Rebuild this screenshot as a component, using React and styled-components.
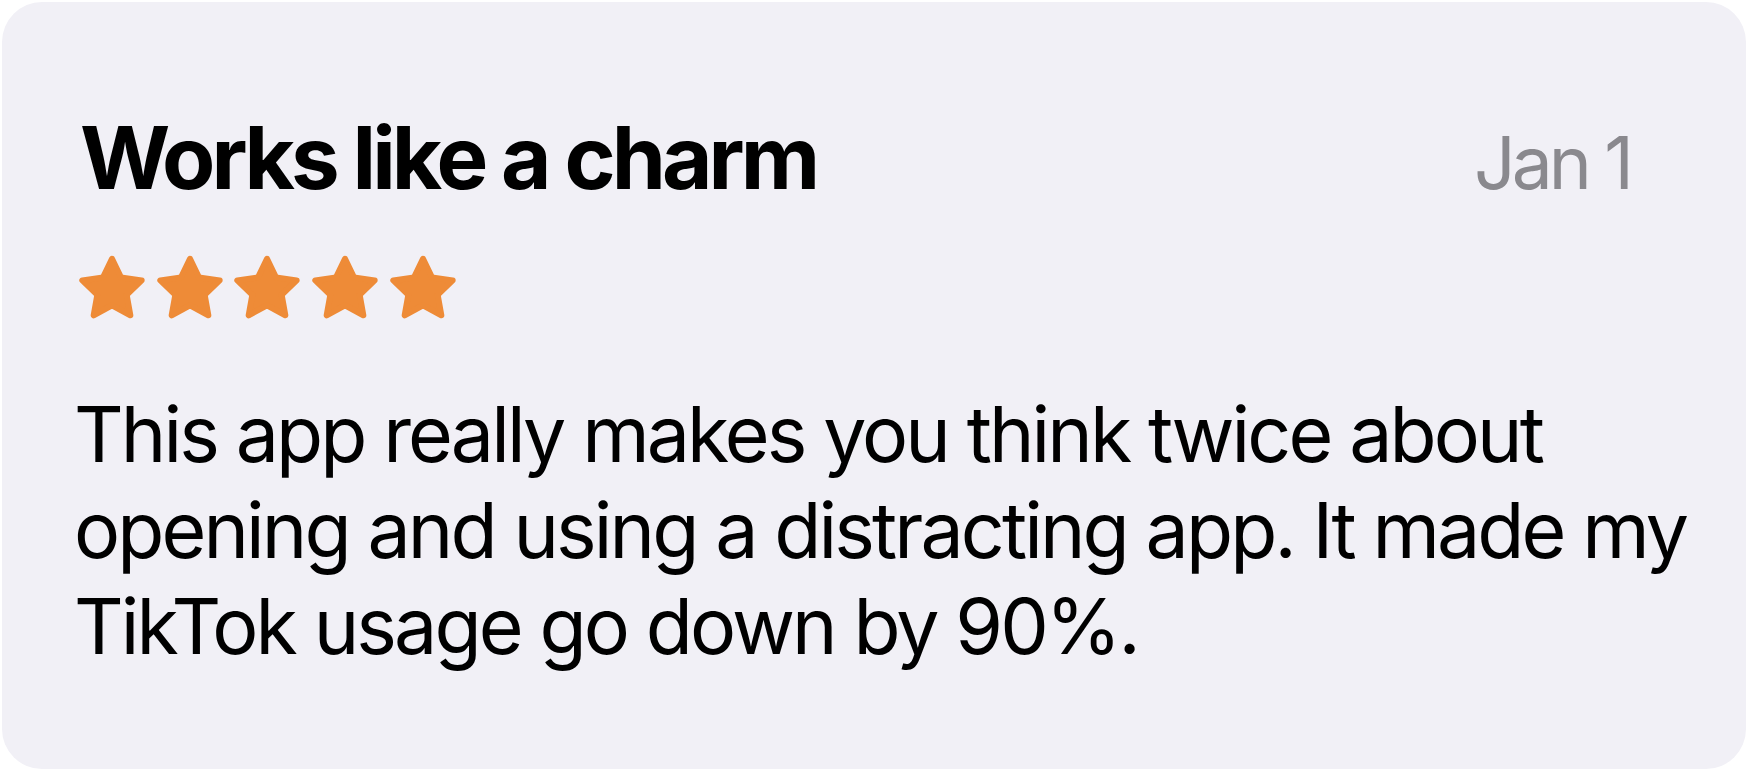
import React from 'react'
import styled, { createGlobalStyle } from 'styled-components'

const GlobalStyle = createGlobalStyle`
  html, body {
    margin: 0;
    padding: 0;
    background: #ffffff;
  }
  body {
    font-family: Inter, "Noto Sans", "Liberation Sans", sans-serif;
    -webkit-font-smoothing: antialiased;
  }
`

const review = {
  title: 'Works like a charm',
  date: 'Jan 1',
  rating: 5,
  body: 'This app really makes you think twice about opening and using a distracting app. It made my TikTok usage go down by 90%.',
}

// rounded five point star, like the iOS star.fill glyph
const starPoints = (() => {
  const R = 31.2
  const r = 15.4
  const pts = []
  for (let i = 0; i < 10; i++) {
    const rad = i % 2 === 0 ? R : r
    const a = (Math.PI / 5) * i - Math.PI / 2
    pts.push(`${(rad * Math.cos(a)).toFixed(2)},${(rad * Math.sin(a)).toFixed(2)}`)
  }
  return pts.join(' ')
})()

const Star = () => (
  <StarIcon viewBox="-35 -36 70 66" aria-hidden="true">
    <polygon points={starPoints} />
  </StarIcon>
)

const ReviewCard = ({ data }) => {
  return (
    <Card>
      <Header>
        <Title>{data.title}</Title>
        <DateLabel>{data.date}</DateLabel>
      </Header>

      {/* stars */}
      <Stars>
        {Array.from({ length: data.rating }).map((_, i) => (
          <Star key={i} />
        ))}
      </Stars>

      <Body>{data.body}</Body>
    </Card>
  )
}

export default function App() {
  return (
    <>
      <GlobalStyle />
      <Page>
        <ReviewCard data={review} />
      </Page>
    </>
  )
}

const Page = styled.div`
  width: 1748px;
  height: 772px;
  padding: 2px;
  box-sizing: border-box;
`

const Card = styled.div`
  width: 1744px;
  height: 767px;
  box-sizing: border-box;
  background: #f1f0f6;
  border-radius: 40px;
  padding: 112px 116px 0 78px;
  display: flex;
  flex-direction: column;
`

const Header = styled.div`
  display: flex;
  justify-content: space-between;
  align-items: baseline;
`

const Title = styled.h1`
  margin: 0;
  font-family: Inter, "Liberation Sans", sans-serif;
  font-weight: 700;
  font-size: 87px;
  line-height: 87px;
  letter-spacing: -3.9px;
  color: #000000;
`

const DateLabel = styled.span`
  font-family: Inter, "Liberation Sans", sans-serif;
  font-weight: 400;
  font-size: 73px;
  line-height: 87px;
  letter-spacing: -4px;
  color: #8a898e;
`

const Stars = styled.div`
  display: flex;
  gap: 7.7px;
  margin-top: 48px;
  margin-left: -3px;
`

const StarIcon = styled.svg`
  width: 70px;
  height: 66px;
  display: block;
  polygon {
    fill: #ee8b37;
    stroke: #ee8b37;
    stroke-width: 6;
    stroke-linejoin: round;
  }
`

const Body = styled.p`
  margin: 66px -100px 0 -6px;
  font-family: Inter, "Liberation Sans", sans-serif;
  font-weight: 400;
  font-size: 77px;
  line-height: 96px;
  letter-spacing: -2.9px;
  color: #000000;
`
